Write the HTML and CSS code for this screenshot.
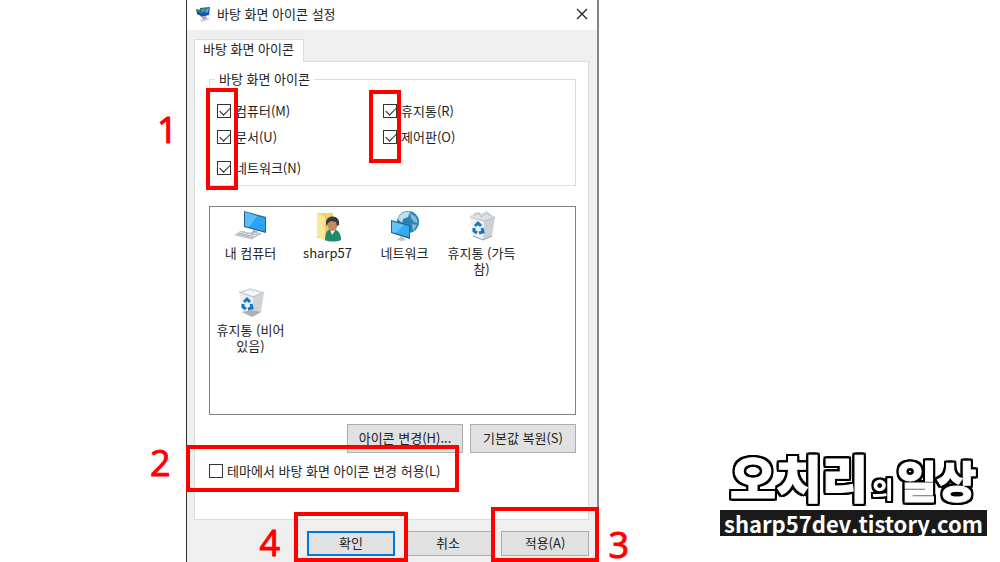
FILE: index.html
```html
<!DOCTYPE html>
<html lang="ko">

<head>
    <meta charset="UTF-8">
    <meta name="viewport" content="width=device-width, initial-scale=1.0">
    <title>바탕 화면 아이콘 설정</title>
    <link rel="stylesheet" href="styles.css">
</head>

<body>
    <main class="dialog">
        <header class="titlebar">
            <svg class="app-icon" viewBox="0 0 16 16" aria-hidden="true">
                <path d="M5 2l10-1-1 8-8 2z" fill="#2848b8" />
                <path d="M6 3l5-1-2 4-3 1z" fill="#3fae49" />
                <path d="M11 3l3-1-1 4-3 1z" fill="#3db8e8" />
                <path d="M1 3l6 1v6l-5-2z" fill="#1f8f58" />
                <path d="M2 5l5 3-1 2-4-2z" fill="#2346a8" />
                <path d="M7 11l4-1 1 3-4 1z" fill="#9aa3ad" />
                <path d="M5 14l8-2 2 1-8 3z" fill="#c8cdd3" />
            </svg>
            <h1>바탕 화면 아이콘 설정</h1>
            <button type="button" class="close" aria-label="닫기">
                <svg viewBox="0 0 12 12"><path d="M1 1l10 10M11 1L1 11" stroke="#222" stroke-width="1.3" /></svg>
            </button>
        </header>

        <form class="content">
            <div class="tabs"><button type="button" class="tab">바탕 화면 아이콘</button></div>

            <div class="panel">
                <fieldset>
                    <legend>바탕 화면 아이콘</legend>
                    <div class="checks">
                        <label><input type="checkbox" checked>컴퓨터(M)</label>
                        <label><input type="checkbox" checked>휴지통(R)</label>
                        <label><input type="checkbox" checked>문서(U)</label>
                        <label><input type="checkbox" checked>제어판(O)</label>
                        <label><input type="checkbox" checked>네트워크(N)</label>
                    </div>
                </fieldset>

                <ul class="icons">
                    <li>
                        <svg viewBox="0 0 32 32">
                            <path d="M9 1l22 6v16L9 17z" fill="#2d5f86" />
                            <path d="M10 2l20 6v13.500L10 16z" fill="#2aa5f5" />
                            <path d="M10 2l12 4-8 11-4-1z" fill="#5abcfb" />
                            <path d="M18 20l4 1v3l-5-1z" fill="#9babb8" />
                            <path d="M15 23l6-1 5 2-6 2z" fill="#d3dbe1" stroke="#8d9ba7" stroke-width=".5" />
                            <path d="M6 21l17 4-6 4L0 25z" fill="#e3e7ea" stroke="#9ca6ae" stroke-width=".6" />
                            <path d="M4 23l16 4M2 24l16 4M10 22l-7 3M14 23l-7 3M18 24l-7 3" stroke="#9ca6ae" stroke-width=".7" />
                        </svg>
                        <span>내 컴퓨터</span>
                    </li>
                    <li>
                        <svg viewBox="0 0 32 32">
                            <path d="M5 3h16v25H5z" fill="#f2cf68" />
                            <path d="M5 3l9 4v24l-9-5z" fill="#ffe694" />
                            <path d="M14 7v24" stroke="#dfb64c" />
                            <path d="M13 30c0-8 3-11 7-11 6 0 9 4 9 11-4 2-12 2-16 0z" fill="#238a68" />
                            <path d="M18 19l2 6 4-6z" fill="#fff" />
                            <ellipse cx="20.500" cy="15" rx="5" ry="6" fill="#c48b62" />
                            <path d="M14 14c-1-10 15-10 13 1l-2 1-1-4-5-1-3 2-1 3z" fill="#333b3d" />
                        </svg>
                        <span>sharp57</span>
                    </li>
                    <li>
                        <svg viewBox="0 0 32 32">
                            <circle cx="19" cy="12" r="11" fill="#2f82ae" />
                            <path d="M9 9c2-6 7-8 12-7l-2 5-5 2-1 4z" fill="#bde2ee" />
                            <path d="M21 3l6 4 2 6-4-1-3-4zM23 14l5 1-4 6z" fill="#80bed7" />
                            <path d="M2 10l19 5v14L2 23z" fill="#256589" />
                            <path d="M3 11.500l17 4.500v11L3 22z" fill="#35aaf5" />
                            <path d="M3 11.500l12 3.500-8 8-4-1z" fill="#61c1fb" />
                            <path d="M11 26l4 1v2l3 1-6 1-5-2 4-1z" fill="#bbc6cf" />
                        </svg>
                        <span>네트워크</span>
                    </li>
                    <li>
                        <svg viewBox="0 0 32 32">
                            <path d="M4 6l6-4 6 1 5-2 8 6-2 5H6z" fill="#dfe2e4" />
                            <path d="M8 5l5-2 2 4 6-4 5 4" fill="none" stroke="#b4babf" />
                            <path d="M4 7l14 4-1 19-10-4z" fill="#eef0f2" />
                            <path d="M18 11l11-4-3 19-9 4z" fill="#cbd0d4" />
                            <path d="M4 7l14 4 11-4" fill="none" stroke="#c2c7cc" />
                            <path d="M7 26l10 4 9-4" fill="none" stroke="#979fa5" />
                            <g fill="none" stroke="#1177c9" stroke-width="3">
                                <path d="M9 16l3-3 3 3" />
                                <path d="M16 18l1 4-4 1" />
                                <path d="M11 23l-3-2v-3" />
                            </g>
                        </svg>
                        <span>휴지통 (가득 참)</span>
                    </li>
                    <li>
                        <svg viewBox="0 0 32 32">
                            <path d="M4 5l11-4 14 4-11 6z" fill="#d5d9dc" />
                            <path d="M7 6l8-3 11 3-8 3z" fill="#f5f6f7" />
                            <path d="M4 5l14 5-1 20-10-4z" fill="#eceff1" />
                            <path d="M18 10l11-5-3 20-9 5z" fill="#cfd4d8" />
                            <path d="M4 5l14 5 11-5" fill="none" stroke="#bcc2c7" />
                            <path d="M7 25l9-2 10 2-9 5z" fill="#aab0b6" />
                            <g fill="none" stroke="#1177c9" stroke-width="3">
                                <path d="M9 15l3-3 3 3" />
                                <path d="M16 17l1 4-4 1" />
                                <path d="M11 22l-3-2v-3" />
                            </g>
                        </svg>
                        <span>휴지통 (비어 있음)</span>
                    </li>
                </ul>

                <div class="icon-buttons">
                    <button type="button" class="btn btn-change">아이콘 변경(H)...</button>
                    <button type="button" class="btn btn-restore">기본값 복원(S)</button>
                </div>

                <label class="theme"><input type="checkbox">테마에서 바탕 화면 아이콘 변경 허용(L)</label>
            </div>

            <footer class="actions">
                <button type="button" class="btn btn-ok">확인</button>
                <button type="button" class="btn">취소</button>
                <button type="button" class="btn">적용(A)</button>
            </footer>
        </form>

        <!-- step marks -->
        <div class="mark mark-left"></div>
        <div class="mark mark-right"></div>
        <div class="mark mark-theme"></div>
        <div class="mark mark-ok"></div>
        <div class="mark mark-apply"></div>
        <span class="step step-1">1</span>
        <span class="step step-2">2</span>
        <span class="step step-3">3</span>
        <span class="step step-4">4</span>
    </main>

    <aside class="blog">
        <p class="blog-name"><span class="big">오치리</span><span class="small">의</span><span class="mid">일상</span></p>
        <p class="blog-url">sharp57dev.tistory.com</p>
    </aside>
</body>

</html>
```
FILE: styles.css
```css
* {
    box-sizing: border-box;
}

body {
    margin: 0;
    height: 100vh;
    overflow: hidden;
    display: grid;
    grid-template-columns: 186fr minmax(413px, 413fr) 401fr;
    grid-template-rows: 100%;
    background-color: #ffffff;
    color: #222222;
    font-family: "Noto Sans CJK KR", sans-serif;
    font-size: 13px;
    line-height: 16px;
}

button {
    font: inherit;
    color: inherit;
    padding: 0;
}

.dialog {
    grid-column: 2;
    position: relative;
    border-left: 1px solid #333333;
    border-right: 2px solid #858585;
    background-color: #efefef;
}

.titlebar {
    display: flex;
    align-items: center;
    height: 30px;
    padding: 0 9px 2px 8px;
    background-color: #ffffff;
}

.app-icon {
    width: 16px;
    height: 16px;
    margin-right: 6px;
}

h1 {
    flex: 1;
    margin: 0;
    font-size: 13px;
    font-weight: normal;
}

.close {
    width: 12px;
    height: 12px;
    border: none;
    background: none;
}

.close svg {
    display: block;
}

.content {
    padding: 9px 8px 0 7px;
}

.tabs {
    display: flex;
}

.tab {
    position: relative;
    height: 23px;
    margin-bottom: -1px;
    padding: 0 9px 4px 8px;
    border: 1px solid #dcdcdc;
    border-bottom: none;
    background-color: #ffffff;
}

.panel {
    padding: 7px 12px 0 14px;
    height: 459px;
    border: 1px solid #dcdcdc;
    background-color: #ffffff;
}

fieldset {
    margin: 0;
    padding: 9px 7px 0;
    border: 1px solid #dcdcdc;
}

legend {
    margin-left: -2px;
    padding: 0 4px;
    line-height: 20px;
}

.checks {
    display: grid;
    grid-template-columns: 166fr 185fr;
    grid-template-rows: 26px 26px 35px;
    align-items: center;
}

label {
    display: flex;
    align-items: center;
    gap: 4px;
}

input[type="checkbox"] {
    appearance: none;
    position: relative;
    flex: none;
    width: 14px;
    height: 14px;
    margin: 0;
    border: 1px solid #333333;
    background-color: #ffffff;
}

input[type="checkbox"]:checked::after {
    content: "";
    position: absolute;
    left: 2px;
    top: 2px;
    width: 9px;
    height: 5px;
    border-left: 1px solid #222222;
    border-bottom: 1px solid #222222;
    transform: rotate(-45deg);
}

.icons {
    display: grid;
    grid-template-columns: repeat(auto-fill, 77px);
    grid-auto-rows: 77px;
    height: 209px;
    margin: 20px 0 9px;
    padding: 3px 2px;
    border: 1px solid #7f8287;
    list-style: none;
}

.icons li {
    display: flex;
    flex-direction: column;
    align-items: center;
    gap: 3px;
    text-align: center;
    word-break: keep-all;
}

.icons svg {
    width: 32px;
    height: 32px;
}

.btn {
    width: 88px;
    height: 25px;
    padding-bottom: 2px;
    border: 1px solid #adadad;
    background-color: #e1e1e1;
}

.icon-buttons {
    display: flex;
    justify-content: flex-end;
    gap: 7px;
}

.icon-buttons .btn {
    height: 29px;
}

.icon-buttons .btn-change {
    width: 116px;
}

.icon-buttons .btn-restore {
    width: 106px;
}

.theme {
    margin-top: 10px;
    height: 16px;
}

.actions {
    display: flex;
    justify-content: flex-end;
    gap: 9px;
    padding-top: 11px;
}

.btn-ok {
    border: 2px solid #0078d7;
}

.mark {
    position: absolute;
    border: 4px solid #ff0000;
    pointer-events: none;
}

.mark-left {
    left: 19px;
    top: 88px;
    width: 32px;
    height: 102px;
}

.mark-right {
    left: 182px;
    top: 90px;
    width: 32px;
    height: 73px;
}

.mark-theme {
    left: -1px;
    top: 445px;
    width: 273px;
    height: 47px;
}

.mark-ok {
    right: 189px;
    top: 512px;
    width: 114px;
    height: 50px;
}

.mark-apply {
    right: -2px;
    top: 507px;
    width: 108px;
    height: 55px;
}

.step {
    position: absolute;
    color: #ff0000;
    font-family: "Open Sans", sans-serif;
    font-size: 36px;
    line-height: 36px;
    -webkit-text-stroke: 1px #ff0000;
}

.step-1 {
    left: -30px;
    top: 112px;
}

.step-2 {
    left: -37px;
    top: 445px;
}

.step-3 {
    right: -32px;
    top: 527px;
}

.step-4 {
    right: 317px;
    top: 525px;
}

.blog {
    align-self: end;
    justify-self: end;
    margin: 0 13px 26px 0;
}

.blog p {
    margin: 0;
}

.blog-name {
    display: flex;
    align-items: baseline;
    gap: 4px;
    padding-left: 10px;
    color: #ffffff;
    font-weight: 900;
    line-height: 44px;
    -webkit-text-stroke: 1px #ffffff;
    filter: drop-shadow(2px 0 0 #000000) drop-shadow(-2px 0 0 #000000) drop-shadow(0 2px 0 #000000) drop-shadow(0 -2px 0 #000000);
}

.big {
    font-size: 50px;
}

.mid {
    font-size: 43px;
}

.small {
    font-size: 23px;
    -webkit-text-stroke-width: 0;
}

.blog-url {
    padding: 0 4px;
    background-color: #1a1a1a;
    color: #ffffff;
    font-size: 22px;
    font-weight: bold;
    line-height: 26px;
}
```
